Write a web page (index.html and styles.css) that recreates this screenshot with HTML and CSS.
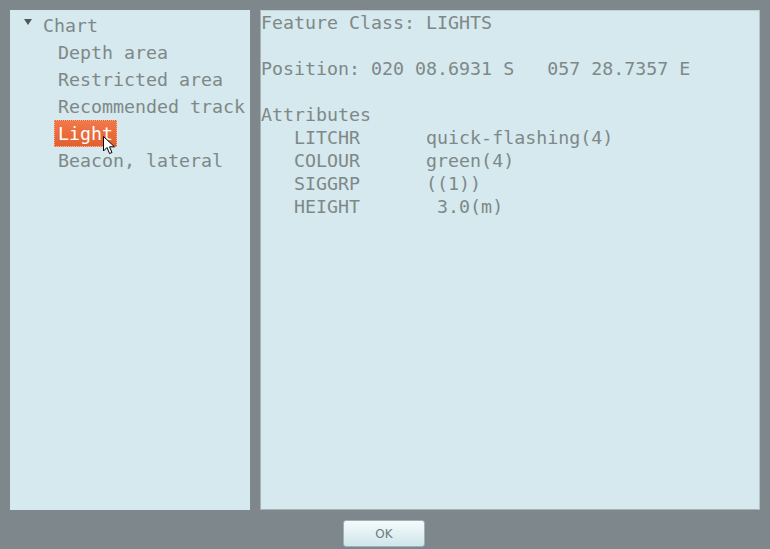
FILE: index.html
```html
<!DOCTYPE html>
<html>
<head>
<meta charset="utf-8">
<link rel="stylesheet" href="styles.css">
</head>
<body>
<div class="dialog">
  <div class="panes">
    <div class="tree">
      <div class="row root"><span class="twisty"></span><span class="label">Chart</span></div>
      <div class="row child"><span class="label">Depth area</span></div>
      <div class="row child"><span class="label">Restricted area</span></div>
      <div class="row child"><span class="label">Recommended track</span></div>
      <div class="row child"><span class="label selected">Light<svg class="cursor" width="14" height="20" viewBox="0 0 14 20"><path d="M0.5 0.5 L0.5 15 L4 11.5 L6.5 17.5 L9 16.5 L6.5 10.8 L11.5 10.8 Z" fill="#ffffff" stroke="#000000" stroke-width="1" stroke-linejoin="miter"/></svg></span></div>
      <div class="row child"><span class="label">Beacon, lateral</span></div>
    </div>
    <div class="info">
<pre class="text">Feature Class: LIGHTS

Position: 020 08.6931 S   057 28.7357 E

Attributes
   LITCHR      quick-flashing(4)
   COLOUR      green(4)
   SIGGRP      ((1))
   HEIGHT       3.0(m)</pre>
    </div>
  </div>
  <div class="buttons">
    <button class="ok">OK</button>
  </div>
</div>
</body>
</html>
```

FILE: styles.css
```css
html, body {
  margin: 0;
  padding: 0;
  background: #7e888c;
}
.dialog {
  width: 770px;
  height: 549px;
  box-sizing: border-box;
  padding: 10px 10px 0 10px;
  display: flex;
  flex-direction: column;
}
.panes {
  display: flex;
  gap: 10px;
  height: 500px;
}
.tree {
  width: 240px;
  height: 500px;
  background: #d5e9ee;
  box-sizing: border-box;
  padding-top: 2px;
  font-family: "DejaVu Sans Mono", monospace;
  font-size: 18.3px;
  color: #7f8888;
}
.row {
  height: 27px;
  line-height: 27px;
  display: flex;
  align-items: center;
  white-space: pre;
}
.root {
  padding-left: 14px;
}
.twisty {
  width: 0;
  height: 0;
  border-left: 4px solid transparent;
  border-right: 4px solid transparent;
  border-top: 6px solid #505858;
  margin-right: 11px;
  margin-top: -7px;
}
.child {
  padding-left: 44px;
}
.label {
  padding: 0 4px;
  height: 27px;
  box-sizing: border-box;
  position: relative;
}
.root .label { padding-left: 0; }
.selected {
  background: linear-gradient(#f2784a, #e2602f);
  color: #ffffff;
  border: 1px dotted #f8b090;
  line-height: 25px;
  padding: 0 3px;
}
.cursor {
  position: absolute;
  left: 48px;
  top: 15px;
}
.info {
  width: 500px;
  height: 500px;
  background: #d5e9ee;
  box-sizing: border-box;
  border: 1px solid #a9b1b2;
  border-top-color: #c4d0d2;
  border-right-color: #b8c2c4;
  padding: 0;
}
.text {
  margin: 0;
  font-family: "DejaVu Sans Mono", monospace;
  font-size: 18.3px;
  line-height: 23px;
  color: #7f8888;
}
.buttons {
  display: flex;
  justify-content: center;
  padding-top: 10px;
  padding-right: 2px;
}
.ok {
  width: 82px;
  height: 27px;
  border: 1px solid #9db3b8;
  border-radius: 3px;
  background: linear-gradient(#f4fbfc, #d0e6ea);
  font-family: "DejaVu Sans", sans-serif;
  font-size: 12px;
  color: #6b7a7e;
  padding: 0;
}
```
